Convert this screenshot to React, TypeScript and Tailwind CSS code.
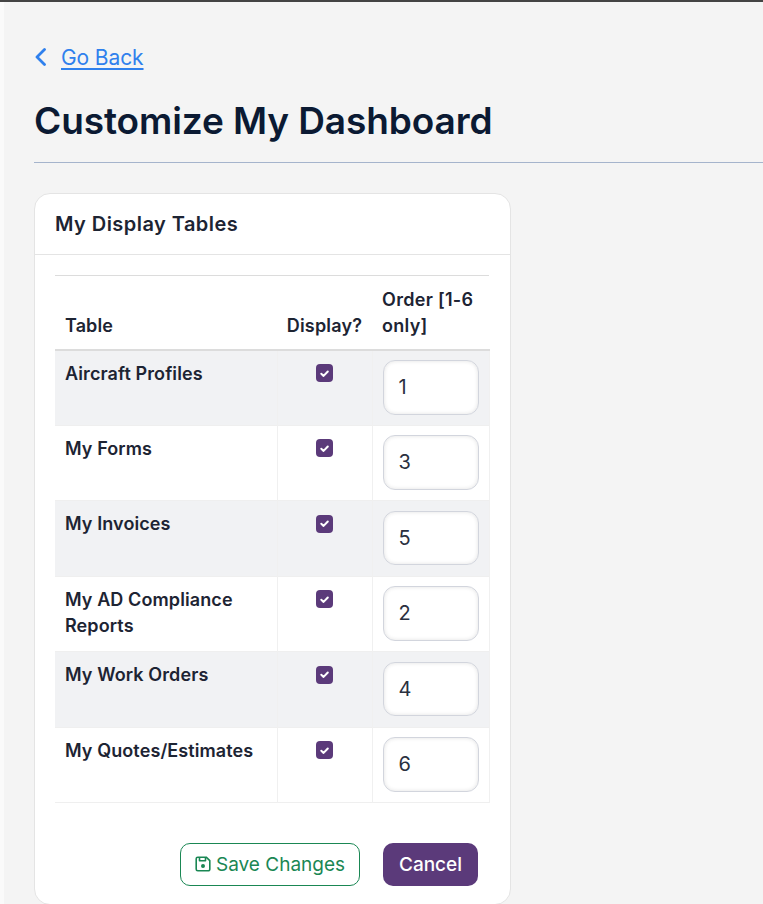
import React from "react";

const rows = [
  ["Aircraft Profiles", "1"],
  ["My Forms", "3"],
  ["My Invoices", "5"],
  ["My AD Compliance Reports", "2"],
  ["My Work Orders", "4"],
  ["My Quotes/Estimates", "6"],
];

function Check() {
  return (
    <span className="inline-flex w-[17px] h-[18px] rounded-[4px] bg-[#5b3a7a] items-center justify-center">
      <svg width="11" height="11" viewBox="0 0 12 12" fill="none">
        <path d="M2.5 6.3 5 8.6 9.6 3.8" stroke="white" strokeWidth="2.2" strokeLinecap="round" strokeLinejoin="round" />
      </svg>
    </span>
  );
}

export default function App() {
  return (
    <div className="h-[904px] overflow-hidden bg-[#fafafa] font-['Inter','Liberation_Sans',sans-serif]">
      <div className="h-[2px] bg-[#444444]" />
      <div className="ml-[4px] h-[902px] bg-[#f4f4f4] pl-[30px] pt-[41px] overflow-hidden">
        <div className="flex items-center h-[30px]">
          <svg width="12" height="20" viewBox="0 0 12 20" fill="none" className="mr-[15px] -mt-[2px]">
            <path d="M10.5 2.5 3 10l7.5 7.5" stroke="#2f80ed" strokeWidth="2.8" strokeLinecap="round" strokeLinejoin="round" />
          </svg>
          <a className="text-[21px] leading-[30px] text-[#2f80ed] underline underline-offset-[3px] tracking-[-0.1px]">Go Back</a>
        </div>
        <h1 className="mt-[24px] text-[37px] leading-[48px] font-semibold text-[#0b1a33] tracking-[-0.1px] whitespace-nowrap">
          Customize My Dashboard
        </h1>
        <div className="mt-[17px] h-px bg-[#a5b4cc]" />
        <div className="mt-[30px] w-[477px] h-[712px] bg-white border border-[#e4e4e4] rounded-[16px]">
          <div className="h-[61px] border-b border-[#e4e4e4] pl-[20px] pt-[14px] text-[20px] leading-[32px] font-semibold text-[#1d2433] tracking-[0.45px]">
            My Display Tables
          </div>
          <div className="px-[20px] pt-[20px]">
            <table className="w-[434px] table-fixed border-collapse text-[#1d2433]">
              <colgroup>
                <col className="w-[222px]" />
                <col className="w-[95px]" />
                <col className="w-[117px]" />
              </colgroup>
              <thead>
                <tr className="border-t border-b-2 border-t-[#dcdcdc] border-b-[#dcdcdc] h-[74px]">
                  <th className="align-bottom text-left pl-[10px] pb-[10px] text-[18px] leading-[26px] font-semibold tracking-[0.1px]">Table</th>
                  <th className="align-bottom text-center pb-[10px] text-[18px] leading-[26px] font-semibold tracking-[0.2px] whitespace-nowrap">Display?</th>
                  <th className="align-bottom text-left pl-[10px] pb-[10px] text-[18px] leading-[26px] font-semibold tracking-[0.3px]">Order [1-6 only]</th>
                </tr>
              </thead>
              <tbody>
                {rows.map(([name, order], i) => (
                  <tr key={name} className={`h-[75.5px] border-b border-[#efefef] ${i % 2 === 0 ? "bg-[#f1f2f4]" : "bg-white"}`}>
                    <td className="align-top pl-[10px] pt-[10px] text-[18px] leading-[26px] font-semibold tracking-[0.1px] border-r border-[#f0f0f0]">{name}</td>
                    <td className="align-top text-center pt-[10px] border-r border-[#f0f0f0]"><Check /></td>
                    <td className="align-top pl-[10px] pt-[9.5px] border-r border-[#f0f0f0]">
                      <div className="w-[96px] h-[54.5px] flex items-center pl-[15px] bg-white border border-[#d2d5dd] rounded-[12px] text-[20px] text-[#2a3040] shadow-[inset_0_0_4px_rgba(0,0,0,0.12)]">
                        {order}
                      </div>
                    </td>
                  </tr>
                ))}
              </tbody>
            </table>
            <div className="mt-[40px] flex">
              <button className="ml-[125px] w-[180px] h-[43px] flex items-center justify-center gap-[5px] border border-[#1a8754] rounded-[10px] bg-white text-[#1a8754] text-[19px]">
                <svg width="16" height="16" viewBox="0 0 16 16" fill="none" stroke="#1a8754" strokeWidth="1.6" strokeLinejoin="round" className="-mt-[2px]">
                  <path d="M2.8 1.2h8.4l3.6 3.4v8.6a1.6 1.6 0 0 1-1.6 1.6H2.8a1.6 1.6 0 0 1-1.6-1.6V2.8a1.6 1.6 0 0 1 1.6-1.6Z" />
                  <path d="M4.5 1.5v3.2h6V1.5" />
                  <circle cx="8" cy="10" r="1.2" fill="#1a8754" />
                </svg>
                <span className="mt-[2px]">Save Changes</span>
              </button>
              <button className="ml-[23px] w-[95px] h-[43px] rounded-[10px] bg-[#5b3a7a] text-white text-[19px] font-medium">
                <span className="relative top-[1px]">Cancel</span>
              </button>
            </div>
          </div>
        </div>
      </div>
    </div>
  );
}
